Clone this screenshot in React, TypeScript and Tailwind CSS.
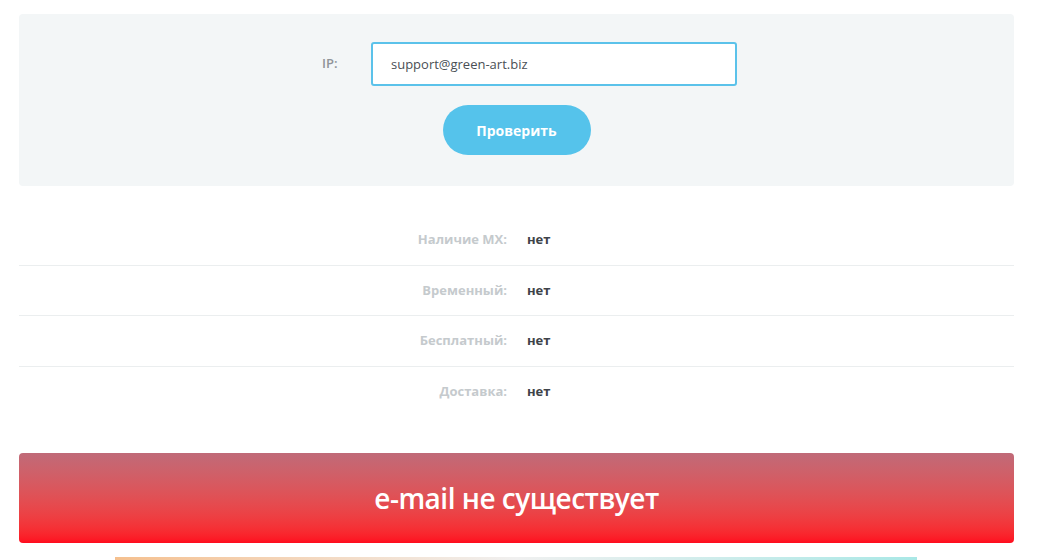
const rows = [
  { label: "Наличие MX:", value: "нет" },
  { label: "Временный:", value: "нет" },
  { label: "Бесплатный:", value: "нет" },
  { label: "Доставка:", value: "нет" },
];

export default function App() {
  return (
    <div className="h-[560px] w-[1039px] overflow-hidden bg-white px-[19px] pt-[14px] font-['Open_Sans',sans-serif]">
      <div className="w-[995px] rounded-[4px] bg-[#f3f6f7] pb-[31px] pt-[28px]">
        <div className="flex items-center">
          <label className="ml-[303px] w-[49px] text-[13px] font-semibold text-[#8f9499]">IP:</label>
          <input
            type="text"
            defaultValue="support@green-art.biz"
            className="h-[44px] w-[366px] rounded-[3px] border-2 border-[#5bc2ea] bg-white px-[18px] text-[13px] text-[#4a4f55] outline-none"
          />
        </div>
        <div className="mt-[19px] flex justify-center">
          <button
            type="button"
            className="h-[50px] w-[148px] rounded-full bg-[#55c3eb] text-[14px] font-bold text-white"
          >
            Проверить
          </button>
        </div>
      </div>

      <div className="mt-[29px] w-[995px]">
        {rows.map((r, i) => (
          <div
            key={r.label}
            className={`flex h-[50.5px] items-center ${i < rows.length - 1 ? "border-b border-[#ebeeef]" : ""}`}
          >
            <div className="w-[488px] text-right text-[13px] font-bold text-[#c5cacd]">{r.label}</div>
            <div className="ml-[20px] text-[13px] font-bold text-[#3e4349]">{r.value}</div>
          </div>
        ))}
      </div>

      <div className="mt-[36px] flex h-[90px] w-[995px] items-center justify-center rounded-[4px] bg-gradient-to-b from-[#c06a78] to-[#ff0a1e]">
        <span className="text-[28px] font-semibold tracking-[-0.5px] text-white">e-mail не существует</span>
      </div>

      <div className="ml-[96px] mt-[14px] h-[10px] w-[802px] bg-gradient-to-r from-[#f5c08f] via-[#f0f0f0] to-[#a9e8e6]" />
    </div>
  );
}
